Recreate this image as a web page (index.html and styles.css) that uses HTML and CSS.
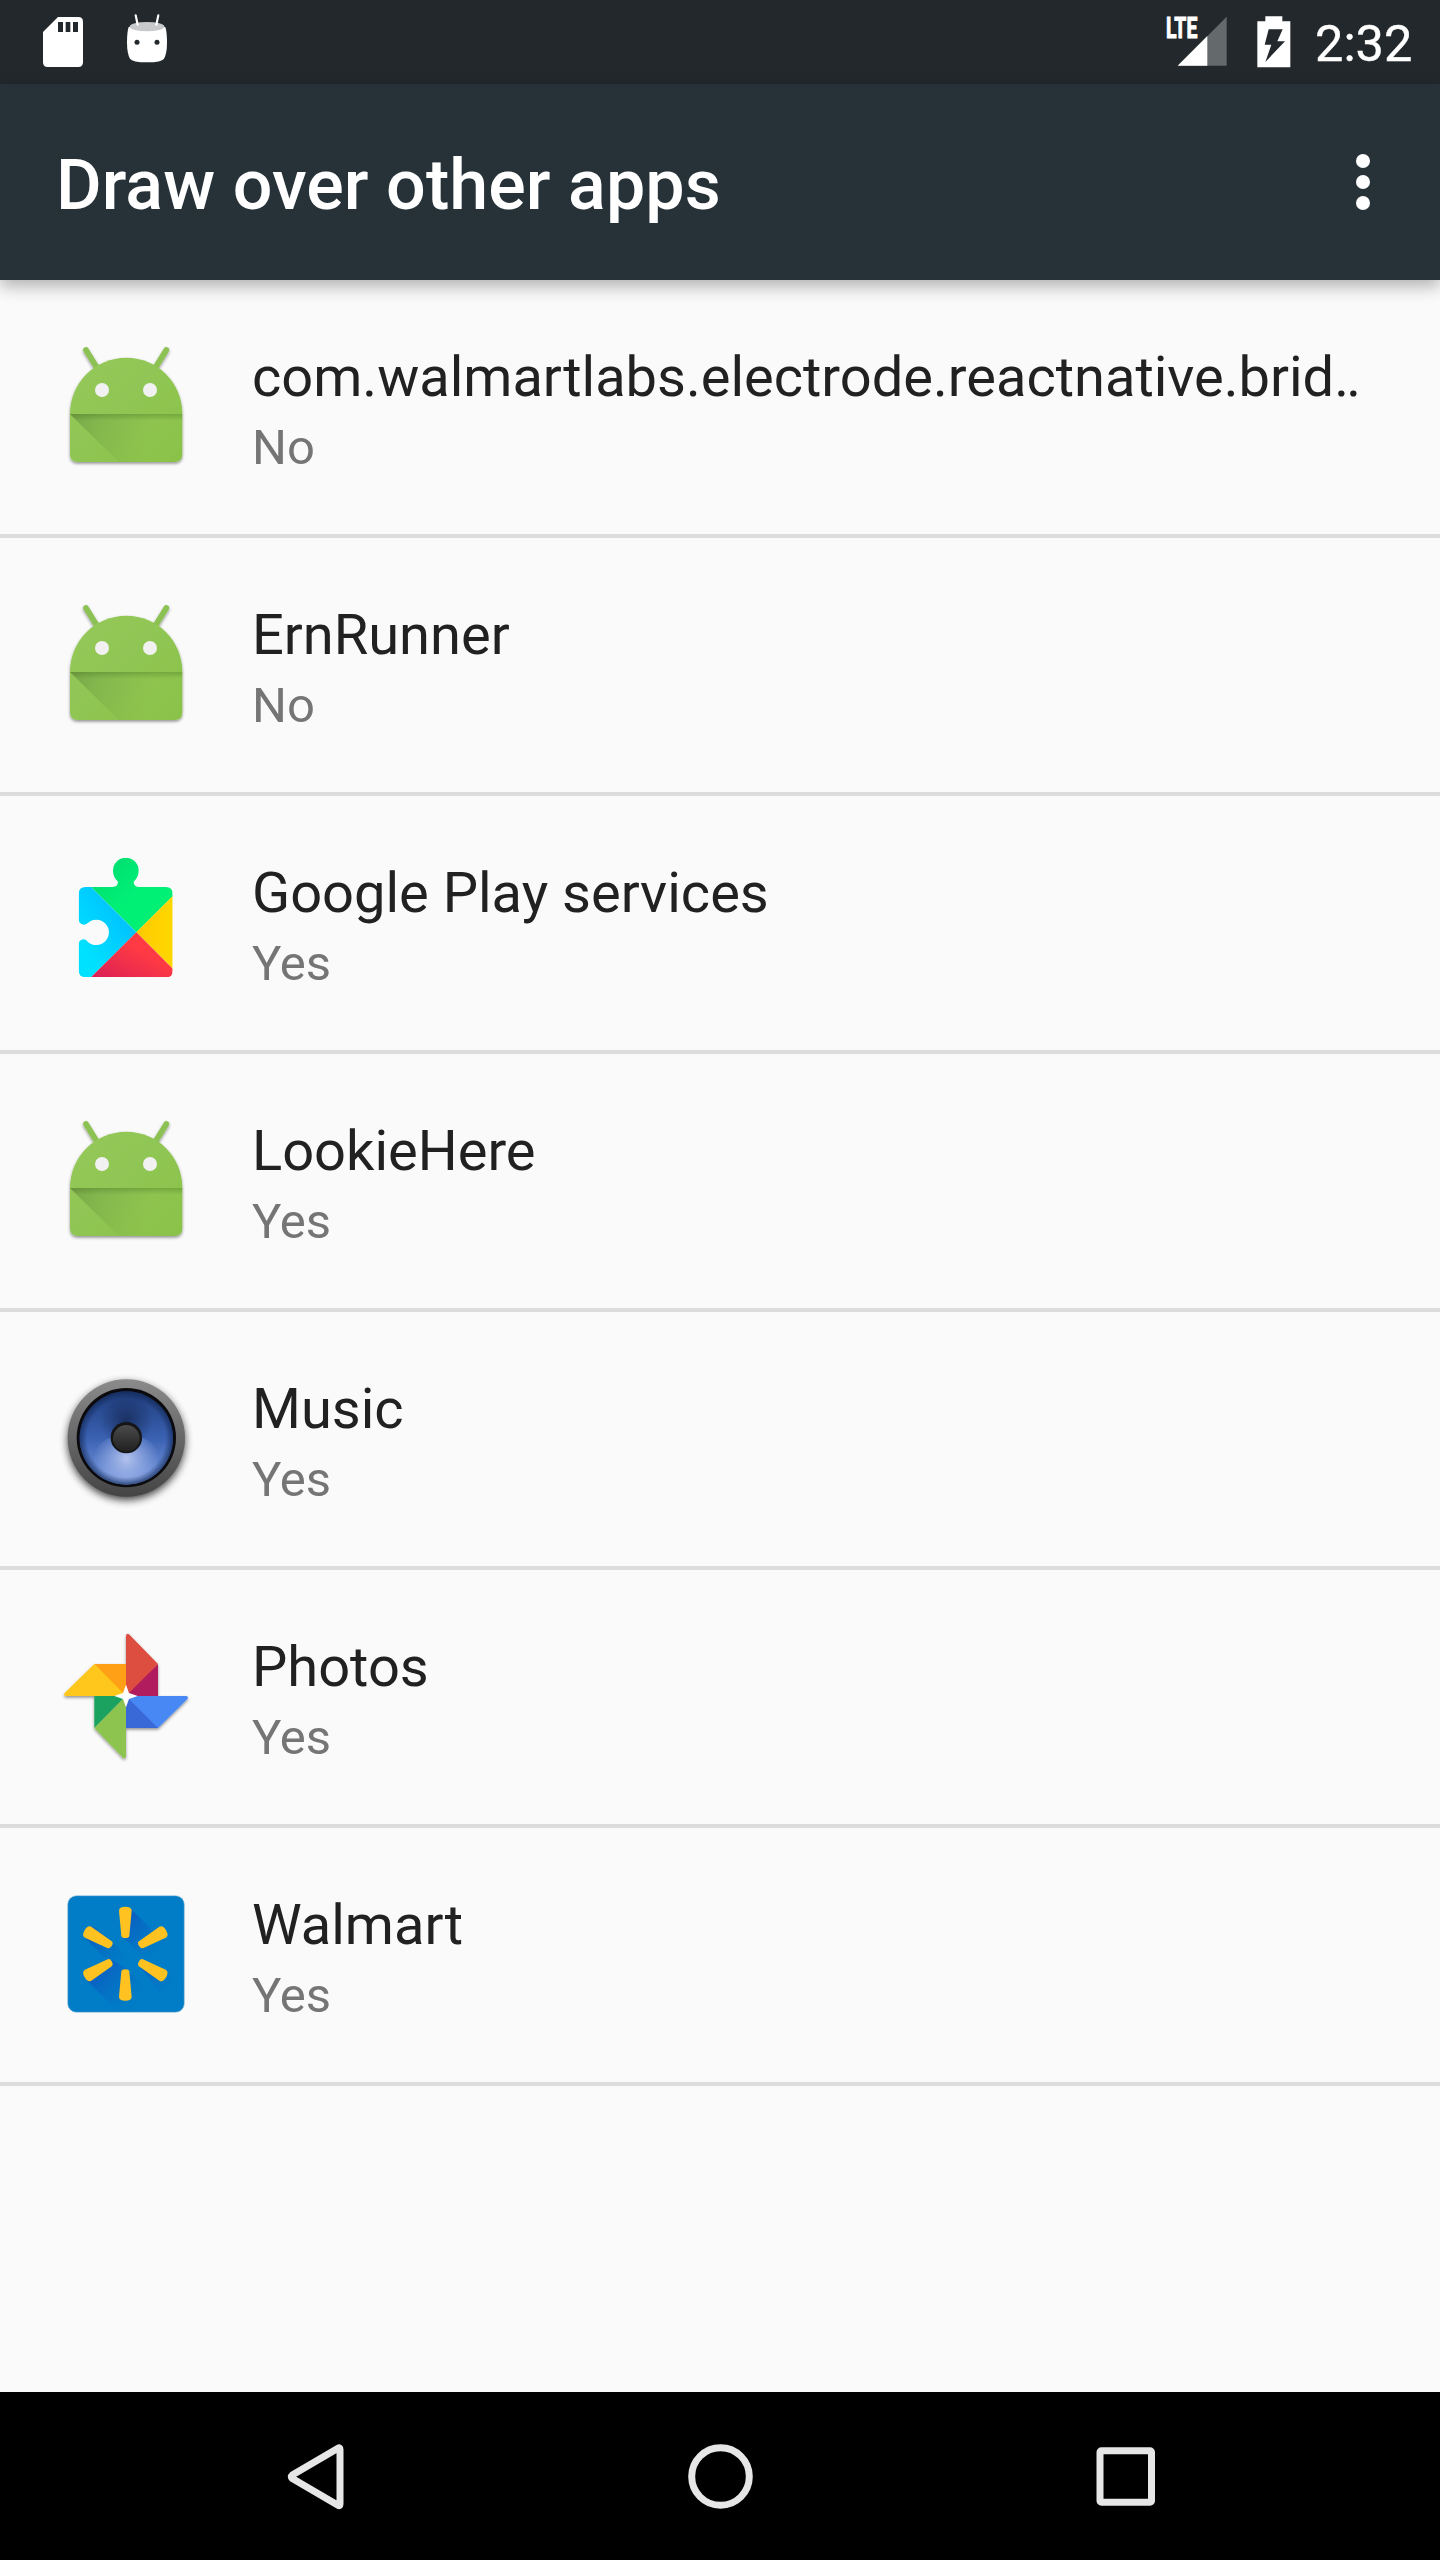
FILE: index.html
```html
<!DOCTYPE html>
<html lang="en">
<head>
<meta charset="utf-8">
<title>Draw over other apps</title>
<link rel="stylesheet" href="styles.css">
</head>
<body>
<svg class="defs" width="0" height="0" aria-hidden="true">
  <defs>
    <linearGradient id="body" x1="0" y1="0" x2="1" y2="1"><stop offset="0" stop-color="#95c95c"/><stop offset="1" stop-color="#8ac249"/></linearGradient>
    <linearGradient id="fold" gradientUnits="userSpaceOnUse" x1="90" y1="282" x2="320" y2="370"><stop offset="0" stop-color="#5e7f3a" stop-opacity=".5"/><stop offset=".35" stop-color="#5e8f3a" stop-opacity=".28"/><stop offset="1" stop-color="#6b9a3a" stop-opacity="0"/></linearGradient>
    <linearGradient id="crease" x1="0" y1="0" x2="0" y2="1"><stop offset="0" stop-color="#3f6b1e" stop-opacity=".32"/><stop offset="1" stop-color="#3f6b1e" stop-opacity="0"/></linearGradient>
    <filter id="drop" x="-20%" y="-20%" width="140%" height="140%"><feDropShadow dx="0" dy="5" stdDeviation="4" flood-color="#000" flood-opacity=".42"/></filter>
    <symbol id="android" viewBox="48 51 420 420">
      <g filter="url(#drop)">
        <path d="M138 90L172 145M379 90L345 145" stroke="#8cc152" stroke-width="17" stroke-linecap="round"/>
        <path d="M90 282C90 188 165 113 259 113S427 188 427 282V402Q427 426 403 426H114Q90 426 90 402Z" fill="url(#body)"/>
      </g>
      <path d="M90 282H427V402Q427 426 403 426H236Z" fill="url(#fold)"/>
      <path d="M90 282H427V302H110Z" fill="url(#crease)"/>
      <circle cx="186" cy="210" r="21" fill="#f1f1f1"/><circle cx="330" cy="210" r="21" fill="#f1f1f1"/>
    </symbol>
  </defs>
</svg>
<div class="screen">
  <header class="status">
    <div class="status-group notices">
      <svg width="40" height="50" viewBox="129 51 120 150"><path d="M174 51H235Q249 51 249 65V187Q249 201 235 201H143Q129 201 129 187V96Z" fill="#fff"/><path d="M174 66h15v30h-15zM197 66h14v30h-14zM219 66h15v30h-15z" fill="#22282c"/></svg>
      <svg width="42" height="50" viewBox="378 41 126 150"><path d="M386 80Q381 95 381 126Q381 160 390 175Q397 186 441 186T492 175Q501 160 501 126Q501 95 496 80Z" fill="#fff"/><ellipse cx="441" cy="79" rx="52" ry="14" fill="#c8c9ca"/><path d="M407 45L413 73M475 45L469 73" stroke="#fff" stroke-width="6.500" stroke-linecap="round"/><circle cx="411" cy="126" r="7.500" fill="#22282c"/><circle cx="471" cy="126" r="7.500" fill="#22282c"/></svg>
    </div>
    <div class="status-group system">
      <svg class="signal" width="62" height="50" viewBox="76 49 186 150"><path d="M114 198L261 51V198Z" fill="#64696b"/><path d="M114 198L203 109V198Z" fill="#fff"/><text class="network" x="79" y="116" textLength="94" lengthAdjust="spacingAndGlyphs">LTE</text></svg>
      <svg width="34" height="52" viewBox="350 47 102 156"><path d="M375 48H426V63H450V201H351V63H375Z" fill="#fff"/><path d="M385 87H427L411 123H434L375 185L393 133H373Z" fill="#22282c"/></svg>
      <span class="clock">2:32</span>
    </div>
  </header>
  <div class="appbar">
    <h1 class="heading">Draw over other apps</h1>
    <svg width="14" height="56" viewBox="0 0 14 56" fill="#fff"><circle cx="7" cy="7" r="7"/><circle cx="7" cy="28" r="7"/><circle cx="7" cy="49" r="7"/></svg>
  </div>
  <main class="list">
    <div class="row"><svg class="icon"><use href="#android"/></svg><div class="label"><div class="name">com.walmartlabs.electrode.reactnative.brid<span class="more">..</span></div><div class="state">No</div></div></div>
    <div class="row"><svg class="icon"><use href="#android"/></svg><div class="label"><div class="name">ErnRunner</div><div class="state">No</div></div></div>
    <div class="row">
      <svg class="icon" viewBox="48 39 420 420">
        <defs>
          <clipPath id="piece"><path d="M137 141H218Q234 139 234 125Q219 111 219 92A38.500 38.500 0 0 1 296 92Q296 111 281 125Q281 139 296 141H378Q398 141 398 161V392Q398 412 378 412H137Q116 412 116 391V315Q116 299 131 298Q139 299 143 305A38 38 0 1 0 143 249Q139 254 131 254Q116 253 116 238V162Q116 141 137 141Z"/></clipPath>
          <linearGradient id="blue" x1="1" y1="0" x2="0" y2="1"><stop offset="0" stop-color="#00b4ff"/><stop offset=".8" stop-color="#00e1ff"/></linearGradient>
          <linearGradient id="red" x1="1" y1="0" x2="0" y2="1"><stop offset=".4" stop-color="#ff3a44"/><stop offset="1" stop-color="#d91f55"/></linearGradient>
          <linearGradient id="green" x1="0" y1="0" x2=".5" y2=".5"><stop offset="0" stop-color="#00d76e"/><stop offset="1" stop-color="#00f076"/></linearGradient>
          <linearGradient id="yellow"><stop offset="0" stop-color="#ffc900"/><stop offset="1" stop-color="#ffd800"/></linearGradient>
        </defs>
        <g clip-path="url(#piece)"><path d="M153 141V50H400V167L289 277Z" fill="url(#green)"/><path d="M110 141H153L289 277L153 412H110Z" fill="url(#blue)"/><path d="M289 277L400 166V388Z" fill="url(#yellow)"/><path d="M153 412L289 277L400 388V412Z" fill="url(#red)"/></g>
      </svg>
      <div class="label"><div class="name">Google Play services</div><div class="state">Yes</div></div>
    </div>
    <div class="row"><svg class="icon"><use href="#android"/></svg><div class="label"><div class="name">LookieHere</div><div class="state">Yes</div></div></div>
    <div class="row">
      <svg class="icon" viewBox="48 57 420 420">
        <defs>
          <linearGradient id="rim" x1="0" y1="0" x2="0" y2="1"><stop offset="0" stop-color="#8b8b8b"/><stop offset="1" stop-color="#444"/></linearGradient>
          <linearGradient id="cone" x1="0" y1="0" x2="0" y2="1"><stop offset="0" stop-color="#1f3d7c"/><stop offset=".5" stop-color="#3a61b2"/><stop offset="1" stop-color="#7e9ee2"/></linearGradient>
          <radialGradient id="shade" gradientUnits="userSpaceOnUse" cx="259" cy="212" r="80"><stop offset="0" stop-color="#162a58" stop-opacity=".85"/><stop offset="1" stop-color="#162a58" stop-opacity="0"/></radialGradient>
          <radialGradient id="glow" gradientUnits="userSpaceOnUse" cx="259" cy="325" r="100"><stop offset="0" stop-color="#bccaf0" stop-opacity=".9"/><stop offset="1" stop-color="#a6baf0" stop-opacity="0"/></radialGradient>
          <radialGradient id="edge"><stop offset=".84" stop-color="#10244f" stop-opacity="0"/><stop offset="1" stop-color="#10244f" stop-opacity=".65"/></radialGradient>
          <linearGradient id="cap" x1="0" y1="0" x2="0" y2="1"><stop offset="0" stop-color="#4b4b4b"/><stop offset="1" stop-color="#202020"/></linearGradient>
          <filter id="soft" x="-20%" y="-20%" width="140%" height="140%"><feGaussianBlur stdDeviation="13"/></filter>
        </defs>
        <circle cx="259" cy="274" r="175" fill="#000" opacity=".78" filter="url(#soft)"/>
        <circle cx="259" cy="264" r="176" fill="url(#rim)"/><circle cx="259" cy="263" r="149" fill="#0b0b0f"/>
        <circle cx="259" cy="264" r="140" fill="url(#cone)"/><circle cx="259" cy="212" r="80" fill="url(#shade)"/><ellipse cx="259" cy="325" rx="98" ry="72" fill="url(#glow)"/><circle cx="259" cy="264" r="140" fill="url(#edge)"/>
        <circle cx="259" cy="263" r="47" fill="#151515"/><circle cx="259" cy="265" r="40" fill="url(#cap)"/>
      </svg>
      <div class="label"><div class="name">Music</div><div class="state">Yes</div></div>
    </div>
    <div class="row">
      <svg class="icon" viewBox="48 51 420 420">
        <g filter="url(#drop)">
          <path d="M163 162H258V258H249Z" fill="#ffa016"/><path d="M163 162L249 248L258 258H77Q69 256 74 249Z" fill="#ffc61a"/>
          <path d="M354 162V258H258V250Z" fill="#b01c5d"/><path d="M258 258V77Q260 68 267 73L354 162Z" fill="#dd4e41"/>
          <path d="M258 258H354V354H258Z" fill="#3969d6"/><path d="M258 258H439Q447 260 442 267L354 354Z" fill="#4688f4"/>
          <path d="M163 258H258L163 354Z" fill="#1ba260"/><path d="M258 258V439Q256 448 249 443L163 354Z" fill="#8dc44f"/>
        </g>
        <path d="M258 224L267 249L293 258L267 267L258 292L249 267L223 258L249 249Z" fill="#fff"/>
      </svg>
      <div class="label"><div class="name">Photos</div><div class="state">Yes</div></div>
    </div>
    <div class="row">
      <svg class="icon" viewBox="48 45 420 420">
        <defs>
          <linearGradient id="cast" gradientUnits="userSpaceOnUse" x1="150" y1="190" x2="270" y2="310"><stop offset="0" stop-color="#0a5cc0"/><stop offset="1" stop-color="#007dc6" stop-opacity="0"/></linearGradient>
          <linearGradient id="castTop" gradientUnits="userSpaceOnUse" x1="270" y1="140" x2="390" y2="260"><stop offset="0" stop-color="#0a5fc2"/><stop offset="1" stop-color="#007dc6" stop-opacity="0"/></linearGradient>
          <linearGradient id="castLow" gradientUnits="userSpaceOnUse" x1="190" y1="290" x2="310" y2="410"><stop offset="0" stop-color="#0a60c3"/><stop offset="1" stop-color="#007dc6" stop-opacity="0"/></linearGradient>
          <linearGradient id="castRight" gradientUnits="userSpaceOnUse" x1="310" y1="290" x2="400" y2="380"><stop offset="0" stop-color="#0a62c3"/><stop offset="1" stop-color="#007dc6" stop-opacity="0"/></linearGradient>
          <path id="ray" d="M237 122Q237 110 256 110T275 122L268 197Q267 204 256 204T244 197Z"/>
        </defs>
        <rect x="83" y="77" width="350" height="350" rx="26" fill="#007dc6" stroke="#a9cce2" stroke-width="2"/>
        <path d="M134 203L158 170L216 214L290 290L210 280Z" fill="url(#cast)"/>
        <path d="M272 116L425 269L380 330L248 200Z" fill="url(#castTop)"/>
        <path d="M134 325L216 270L260 296L385 426H235Z" fill="url(#castLow)"/>
        <path d="M298 287L380 305L420 345L385 400Z" fill="url(#castRight)"/>
        <g fill="#ffc220"><use href="#ray"/><use href="#ray" transform="rotate(60 256 251)"/><use href="#ray" transform="rotate(120 256 251)"/><use href="#ray" transform="rotate(180 256 251)"/><use href="#ray" transform="rotate(240 256 251)"/><use href="#ray" transform="rotate(300 256 251)"/></g>
      </svg>
      <div class="label"><div class="name">Walmart</div><div class="state">Yes</div></div>
    </div>
  </main>
  <nav class="navbar">
    <svg width="70" height="70" viewBox="0 0 70 70"><path d="M60 8.500V63Q60 65.500 58 64.300L12.300 37.600Q10.300 35.800 12.300 34L58 7.200Q60 6 60 8.500Z"/></svg>
    <svg width="70" height="70" viewBox="0 0 70 70"><circle cx="35.500" cy="35.500" r="28.800"/></svg>
    <svg width="70" height="70" viewBox="0 0 70 70"><rect x="10" y="9.800" width="51.500" height="51.500" rx="1.500"/></svg>
  </nav>
</div>
</body>
</html>
```
FILE: styles.css
```css
* { box-sizing: border-box; }
body { margin: 0; font-family: Roboto, "Noto Sans", sans-serif; background: #fafafa; }
.defs { position: absolute; }
.screen { width: 1440px; height: 2560px; display: flex; flex-direction: column; overflow: hidden; }
.status { height: 84px; flex: none; display: flex; justify-content: space-between; background: #22282c; padding: 0 28px 0 43px; }
.status-group { display: flex; align-items: flex-start; }
.notices { gap: 43px; padding-top: 14px; }
.notices svg:first-child { margin-top: 3px; }
.system { padding-top: 16px; }
.system svg + svg { margin-left: 30px; }
.signal { overflow: visible; }
.network { font: 700 86px Roboto, sans-serif; fill: #fff; stroke: #fff; stroke-width: 3px; }
.clock { width: 97px; margin: -1px 0 0 24px; color: #fff; font-size: 50.5px; line-height: 58px; font-weight: 400; white-space: nowrap; -webkit-text-stroke: .4px #fff; }
.appbar { height: 196px; flex: none; display: flex; align-items: center; justify-content: space-between; padding: 0 70px 0 56px; background: #263238; box-shadow: 0 6px 16px rgba(0, 0, 0, .3); position: relative; }
.heading { margin: 0; padding-top: 6px; color: #fff; font-size: 70px; line-height: 82px; font-weight: 500; letter-spacing: .07px; white-space: nowrap; }
.list { flex: 1; }
.row { height: 258px; display: flex; align-items: center; gap: 56px; padding-left: 56px; border-bottom: 4px solid #dcdcdc; }
.icon { width: 140px; height: 140px; flex: none; overflow: visible; }
.label { display: flex; flex-direction: column; gap: 9px; padding-top: 7px; white-space: nowrap; }
.name { font-size: 56px; line-height: 66px; color: #212121; }
.more { letter-spacing: -2.8px; }
.state { font-size: 49px; line-height: 58px; color: #757575; }
.navbar { height: 168px; flex: none; display: flex; align-items: center; justify-content: space-between; padding: 0 280px; background: #000; }
.navbar svg { fill: none; stroke: #e6e6e6; stroke-width: 7; stroke-linejoin: round; }
```
